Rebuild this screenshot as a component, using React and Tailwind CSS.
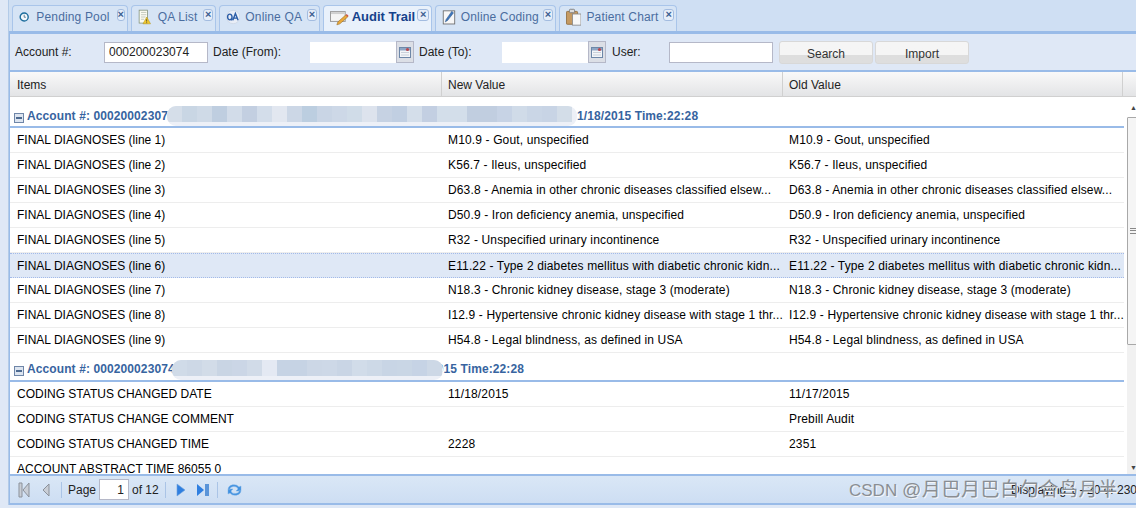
import React from 'react';

const font = { fontFamily: '"Liberation Sans", Arial, sans-serif' };

const ClockIcon = () => (
  <svg width="18" height="18" viewBox="0 0 18 18">
    <circle cx="9" cy="9" r="7" fill="#f4f8fc" stroke="#1b6c9c" strokeWidth="2.4" />
    <path d="M9 5v4.4h3" fill="none" stroke="#24506f" strokeWidth="1.2" />
  </svg>
);
const NoteIcon = () => (
  <svg width="18" height="20" viewBox="0 0 18 20">
    <rect x="1.5" y="1" width="11" height="17" fill="#fbfbf2" stroke="#7f8f78" />
    <path d="M4 4h7M4 7h7M4 10h6M4 13h4" stroke="#b5bcae" />
    <path d="M11.5 10l5 9H6.5z" fill="#f3c92f" stroke="#a88a10" strokeWidth=".6" />
    <rect x="11" y="13" width="1" height="3" fill="#333" />
    <rect x="11" y="17" width="1" height="1" fill="#333" />
  </svg>
);
const QaIcon = () => (
  <svg width="18" height="18" viewBox="0 0 18 18">
    <circle cx="9" cy="9" r="8.4" fill="#e9eef7" stroke="#cdd6e4" />
    <path d="M2 9a2.8 3.6 0 1 0 5.6 0a2.8 3.6 0 1 0-5.6 0M5.6 11.2l2.2 2M8.6 13L11.8 4.6 15.2 13M9.8 10.4h4.2" fill="none" stroke="#2c5ea8" strokeWidth="1.8" />
  </svg>
);
const AuditIcon = () => (
  <svg width="20" height="18" viewBox="0 0 20 18">
    <rect x="0.5" y="3.5" width="15" height="10" fill="#f4f4f4" stroke="#9a9a9a" />
    <path d="M1 4h14v2H1z" fill="#cfcfcf" />
    <path d="M7 17l1-3 8-7 2 2-8 7z" fill="#e9a93a" stroke="#9a6b20" strokeWidth=".6" />
    <path d="M16 7l2 2 1-1-2-2z" fill="#d0503f" />
  </svg>
);
const CodingIcon = () => (
  <svg width="18" height="20" viewBox="0 0 18 20">
    <rect x="1.5" y="2.5" width="14" height="16" fill="#f7f7f7" stroke="#666" />
    <path d="M4 16l1-3 7-10 2 2-7 9z" fill="#3f76bb" stroke="#2c5587" strokeWidth=".6" />
  </svg>
);
const ChartIcon = () => (
  <svg width="18" height="20" viewBox="0 0 18 20">
    <rect x="0.5" y="3.5" width="13" height="15" rx="1" fill="#c59a62" stroke="#8d6a3c" />
    <rect x="7.5" y="6.5" width="10" height="13" fill="#f8f8f8" stroke="#8a8a8a" />
    <rect x="4" y="1" width="6" height="4" rx="1" fill="#dcdcdc" stroke="#777" />
  </svg>
);
const CalIcon = () => (
  <svg width="12" height="12" viewBox="0 0 12 12">
    <rect x=".5" y="1.5" width="11" height="10" fill="#f3f5f8" stroke="#6d87a8" />
    <rect x="1" y="2" width="10" height="2.5" fill="#8ea6c4" />
    <circle cx="8.5" cy="3.5" r="1.6" fill="#b8484f" />
    <path d="M2 6.5h8M2 9h8" stroke="#c8d0da" />
  </svg>
);

const tabs = [
  { label: 'Pending Pool', icon: <ClockIcon />, w: 'w-[116px]', gap: 'gap-[7px]' },
  { label: 'QA List', icon: <NoteIcon />, w: 'w-[85px]', gap: 'gap-[6px]' },
  { label: 'Online QA', icon: <QaIcon />, w: 'w-[101px]', gap: 'gap-[5px]' },
  { label: 'Audit Trail', icon: <AuditIcon />, w: 'w-[109px]', gap: 'gap-[2px]', active: true },
  { label: 'Online Coding', icon: <CodingIcon />, w: 'w-[121px]', gap: 'gap-[4px]' },
  { label: 'Patient Chart', icon: <ChartIcon />, w: 'w-[118px]', gap: 'gap-[5px]' },
];

const group1 = [
  ['FINAL DIAGNOSES (line 1)', 'M10.9 - Gout, unspecified', 'M10.9 - Gout, unspecified'],
  ['FINAL DIAGNOSES (line 2)', 'K56.7 - Ileus, unspecified', 'K56.7 - Ileus, unspecified'],
  ['FINAL DIAGNOSES (line 3)', 'D63.8 - Anemia in other chronic diseases classified elsew...', 'D63.8 - Anemia in other chronic diseases classified elsew...'],
  ['FINAL DIAGNOSES (line 4)', 'D50.9 - Iron deficiency anemia, unspecified', 'D50.9 - Iron deficiency anemia, unspecified'],
  ['FINAL DIAGNOSES (line 5)', 'R32 - Unspecified urinary incontinence', 'R32 - Unspecified urinary incontinence'],
  ['FINAL DIAGNOSES (line 6)', 'E11.22 - Type 2 diabetes mellitus with diabetic chronic kidn...', 'E11.22 - Type 2 diabetes mellitus with diabetic chronic kidn...', true],
  ['FINAL DIAGNOSES (line 7)', 'N18.3 - Chronic kidney disease, stage 3 (moderate)', 'N18.3 - Chronic kidney disease, stage 3 (moderate)'],
  ['FINAL DIAGNOSES (line 8)', 'I12.9 - Hypertensive chronic kidney disease with stage 1 thr...', 'I12.9 - Hypertensive chronic kidney disease with stage 1 thr...'],
  ['FINAL DIAGNOSES (line 9)', 'H54.8 - Legal blindness, as defined in USA', 'H54.8 - Legal blindness, as defined in USA'],
];
const group2 = [
  ['CODING STATUS CHANGED DATE', '11/18/2015', '11/17/2015'],
  ['CODING STATUS CHANGE COMMENT', '', 'Prebill Audit'],
  ['CODING STATUS CHANGED TIME', '2228', '2351'],
  ['ACCOUNT ABSTRACT TIME 86055 0', '', ''],
];

// colours of the mosaic squares in the redacted part of the group headers
const mosaic1 = ['#d5dee9', '#c9d6e4', '#cfdae7', '#bfcee0', '#d2dce9', '#c3cfe1', '#d3ddea', '#e2e7f0', '#ccd7e6', '#bccee0', '#c9d5e5', '#cdd8e7', '#d0dce8', '#dde3ed', '#c6d2e3', '#c1cfe2', '#d4deea', '#c3cfe2', '#d3deea', '#d3deea', '#c1cee0', '#c1cee0', '#c7d3e5', '#d0dbe8', '#cad6e6', '#c8d4e5', '#d3dde8'];
const mosaic2 = ['#d0dbe8', '#cdd8e6', '#d2dce8', '#c9d5e4', '#cbd6e6', '#d1dbe8', '#e4e9f3', '#c6d3e4', '#c6d3e4', '#ccd7e6', '#cdd8e7', '#c9d5e5', '#d1dce9', '#cdd9e7', '#c8d5e5', '#c9d6e5', '#c6d3e5', '#cdd8e6'];

const Row = ({ cells }) => (
  <div className={`flex h-[25px] items-center text-[12px] text-black ${cells[3] ? 'border-y border-dotted border-[#a3bae9] bg-[#dfe8f6]' : 'border-b border-[#ededed]'}`}>
    <div className="w-[432px] shrink-0 whitespace-nowrap px-[7px]">{cells[0]}</div>
    <div className="w-[341px] shrink-0 whitespace-nowrap px-[6px] tracking-[.14px]">{cells[1]}</div>
    <div className="w-[341px] shrink-0 whitespace-nowrap px-[6px] tracking-[.14px]">{cells[2]}</div>
  </div>
);

const GroupHeader = ({ left, right, gap, pad }) => (
  <div className={`flex h-[25px] items-end border-b-2 border-[#99bbe8] pl-[4px] text-[12px] font-bold tracking-[.1px] text-[#3764a0] ${pad}`}>
    <span className="mb-[2px] mr-[3px] flex h-[10px] w-[10px] items-center justify-center border border-[#6f86a8] bg-[#dde5f0]">
      <span className="h-[2px] w-[6px] bg-[#4d6a90]" />
    </span>
    <span className="whitespace-nowrap">{left}</span>
    <span className={`whitespace-nowrap ${gap}`}>{right}</span>
  </div>
);

const Mosaic = ({ colours, className }) => (
  <div className={`absolute flex overflow-hidden rounded-[9px] bg-[#edf0f7] ${className}`}>
    {colours.map((c, i) => (
      <div key={i} className="h-[16px] w-[15px] shrink-0" style={{ backgroundColor: c }} />
    ))}
  </div>
);

const Field = ({ w }) => <div className={`h-[21px] border border-[#b5b8c8] bg-white ${w}`} />;

const DateField = () => (
  <div className="flex items-center">
    <div className="h-[21px] w-[86px] bg-white" />
    <div className="flex h-[22px] w-[18px] items-center justify-center border border-[#b5b8c8] bg-[#dcdfe6]"><CalIcon /></div>
  </div>
);

const Btn = ({ children }) => (
  <div className="flex h-[23px] w-[94px] items-end justify-center rounded-[3px] border border-[#d8d8d8] bg-gradient-to-b from-[#f5f5f5] from-60% to-[#dedede] to-60% text-[12px] text-[#333]">
    {children}
  </div>
);

export default function App() {
  return (
    <div style={font} className="relative h-[508px] w-[1136px] overflow-hidden bg-[#dfe8f6]">
      <div className="ml-[8px] w-[1141px] border-l border-[#b3cbe8]">
        {/* tab strip */}
        <div className="flex h-[34px] items-end gap-[3px] border-b-[3px] border-[#99bbe8] bg-[#cfdff3] pl-[3px]">
          {tabs.map((t) => (
            <div key={t.label} className={`flex h-[26px] items-center pb-[3px] ${t.w} ${t.gap} rounded-t-[4px] border border-b-0 border-[#a9c5ea] pl-[6px] ${t.active ? 'bg-[#e9f1fb] text-[13px] font-bold text-[#15428b]' : 'bg-[#d6e4f5] text-[12px] text-[#4a6d9f]'}`}>
              {t.icon}
              <span className={`whitespace-nowrap ${t.active ? '' : 'tracking-[.15px]'}`}>{t.label}</span>
              <span className="mb-[5px] ml-auto mr-[2px] flex h-[12px] w-[12px] items-center justify-center rounded-[3px] border border-[#a3bce0] bg-[#e6eef9] text-[11px] font-bold leading-none text-[#3d5f92]">×</span>
            </div>
          ))}
        </div>

        <div className="flex h-[471px] flex-col border-l border-[#99bbe8]">
          {/* filters */}
          <div className="flex h-[38px] shrink-0 items-center border-b-[2px] border-[#99bbe8] bg-[#dfe8f6] pl-[5px] text-[12px] text-[#222]">
            <span className="w-[89px]">Account #:</span>
            <div className="flex h-[21px] w-[104px] items-center border border-[#b5b8c8] bg-white pl-[4px]">000200023074</div>
            <span className="ml-[5px] w-[97px]">Date (From):</span>
            <DateField />
            <span className="ml-[5px] w-[83px]">Date (To):</span>
            <DateField />
            <span className="ml-[6px] w-[57px]">User:</span>
            <Field w="w-[104px]" />
            <div className="ml-[6px] flex gap-[2px]"><Btn>Search</Btn><Btn>Import</Btn></div>
          </div>

          {/* column headers */}
          <div className="flex h-[25px] shrink-0 items-center border-b border-[#d0d0d0] bg-gradient-to-b from-[#f9f9f9] to-[#e3e4e6] text-[12px] text-[#222]">
            <div className="flex h-full w-[432px] items-center border-r border-[#d0d0d0] px-[7px] pt-[2px]">Items</div>
            <div className="flex h-full w-[341px] items-center border-r border-[#d0d0d0] px-[6px] pt-[2px]">New Value</div>
            <div className="flex h-full w-[340px] items-center border-r border-[#d0d0d0] px-[6px] pt-[2px]">Old Value</div>
          </div>

          {/* grid body */}
          <div className="flex min-h-0 flex-1 bg-white">
            <div className="w-[1114px] shrink-0 overflow-hidden">
              <div className="h-[6px]" />
              <GroupHeader left="Account #: 00020002307" right="1/18/2015 Time:22:28" gap="ml-[409px]" pad="pb-[1px]" />
              {group1.map((r) => <Row key={r[0]} cells={r} />)}
              <div className="h-[4px]" />
              <GroupHeader left="Account #: 000200023074" right="015 Time:22:28" gap="ml-[262px]" pad="pb-[2px]" />
              {group2.map((r) => <Row key={r[0]} cells={r} />)}
            </div>
            {/* scrollbar */}
            <div className="ml-[3px] flex w-[13px] shrink-0 flex-col items-center text-[7px] leading-none text-[#444]">
              <span className="flex h-[20px] items-center">▲</span>
              <div className="flex h-[228px] w-full items-center justify-center rounded-[1px] border border-[#a8a8a8] bg-[#f5f5f5]">
                <span className="h-[6px] w-[7px] border-y border-[#888] after:block after:mt-[1px] after:h-px after:bg-[#888]" />
              </div>
              <div className="w-full flex-1 bg-[#f1f1f1]" />
              <span className="flex h-[14px] w-full items-center justify-center bg-[#f1f1f1]">▼</span>
            </div>
          </div>

          {/* pager */}
          <div className="flex h-[31px] shrink-0 items-center border-y-2 border-[#99bbe8] bg-gradient-to-b from-[#dae7f6] to-[#cddef3] pl-[8px] pr-[12px] text-[12px] text-[#222]">
            <svg width="12" height="16" viewBox="0 0 12 16"><path d="M1 1h3v14H1zM11 1v14L5 8z" fill="#c9ced6" stroke="#8b919a" /></svg>
            <svg className="ml-[10px]" width="12" height="16" viewBox="0 0 12 16"><path d="M9 2v12L3 8z" fill="#c9ced6" stroke="#8b919a" /></svg>
            <span className="ml-[9px] mr-[6px] h-[16px] w-px bg-[#aac4e6]" />
            <span>Page</span>
            <div className="mx-[3px] flex h-[21px] w-[30px] items-center justify-end border border-[#b5b8c8] bg-white pr-[4px]">1</div>
            <span>of 12</span>
            <span className="ml-[6px] mr-[9px] h-[16px] w-px bg-[#aac4e6]" />
            <svg width="12" height="16" viewBox="0 0 12 16"><path d="M2 2v12l8-6z" fill="#2f7fe0" stroke="#6fa3dc" strokeWidth=".6" /></svg>
            <svg className="ml-[9px]" width="14" height="16" viewBox="0 0 14 16"><path d="M1 2v12l7-6z" fill="#2f7fe0" /><rect x="9" y="2" width="4" height="12" fill="#5a94d8" /></svg>
            <span className="ml-[7px] mr-[8px] h-[16px] w-px bg-[#aac4e6]" />
            <svg width="17" height="16" viewBox="0 0 17 16"><path d="M2 7a6 5 0 0 1 11-2l2-1v5h-5l2-2a4 3 0 0 0-8 1zM15 9a6 5 0 0 1-11 2l-2 1V7h5L5 9a4 3 0 0 0 8-1z" fill="#3d8fe0" stroke="#7db2e6" strokeWidth=".5" /></svg>
            <span className="ml-auto whitespace-nowrap">Displaying 1 - 20 of 230</span>
          </div>
        </div>
      </div>

      {/* blurred-out patches over the group headers */}
      <Mosaic colours={mosaic1} className="left-[167px] top-[106px] h-[20px] w-[410px]" />
      <Mosaic colours={mosaic2} className="left-[172px] top-[360px] h-[20px] w-[271px]" />

      {/* watermark */}
      <div className="absolute left-[849px] top-[476px] whitespace-nowrap text-[17px] text-[#8a8e93] [text-shadow:1px_1px_0_#f4f6f9]" style={{ fontFamily: '"Liberation Sans", "Noto Sans CJK SC", sans-serif' }}>
        CSDN <span className="text-[19px] tracking-[.6px]">@月巴月巴白勺合鸟月半</span>
      </div>
    </div>
  );
}
